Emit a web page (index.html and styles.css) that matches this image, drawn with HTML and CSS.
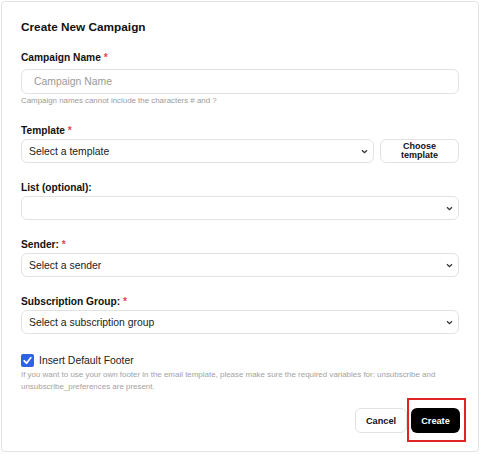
FILE: index.html
```html
<!DOCTYPE html>
<html>
<head>
<meta charset="utf-8">
<link rel="stylesheet" href="styles.css">
</head>
<body>
<div class="card">
  <h1 class="title">Create New Campaign</h1>

  <div class="field field-first">
    <div class="label label-name">Campaign Name <span class="req">*</span></div>
    <div class="input"><span class="placeholder">Campaign Name</span></div>
    <div class="hint">Campaign names cannot include the characters # and ?</div>
  </div>

  <div class="field">
    <div class="label">Template <span class="req">*</span></div>
    <div class="row">
      <div class="select grow"><span>Select a template</span>
        <svg class="chev" width="7" height="5" viewBox="0 0 7 5"><polyline points="1,1.2 3.5,3.6 6,1.2" fill="none" stroke="#333" stroke-width="1.3"/></svg>
      </div>
      <div class="btn-choose">Choose<br>template</div>
    </div>
  </div>

  <div class="field">
    <div class="label">List (optional):</div>
    <div class="select"><span></span>
      <svg class="chev" width="7" height="5" viewBox="0 0 7 5"><polyline points="1,1.2 3.5,3.6 6,1.2" fill="none" stroke="#333" stroke-width="1.3"/></svg>
    </div>
  </div>

  <div class="field">
    <div class="label">Sender: <span class="req">*</span></div>
    <div class="select"><span>Select a sender</span>
      <svg class="chev" width="7" height="5" viewBox="0 0 7 5"><polyline points="1,1.2 3.5,3.6 6,1.2" fill="none" stroke="#333" stroke-width="1.3"/></svg>
    </div>
  </div>

  <div class="field">
    <div class="label">Subscription Group: <span class="req">*</span></div>
    <div class="select"><span>Select a subscription group</span>
      <svg class="chev" width="7" height="5" viewBox="0 0 7 5"><polyline points="1,1.2 3.5,3.6 6,1.2" fill="none" stroke="#333" stroke-width="1.3"/></svg>
    </div>
  </div>

  <div class="field">
    <div class="check-row">
      <span class="checkbox">
        <svg width="13" height="13" viewBox="0 0 13 13"><polyline points="3.2,6.8 5.5,9.2 9.8,3.8" fill="none" stroke="#fff" stroke-width="1.8" stroke-linecap="round" stroke-linejoin="round"/></svg>
      </span>
      <span class="check-label">Insert Default Footer</span>
    </div>
    <div class="help">If you want to use your own footer in the email template, please make sure the required variables for: unsubscribe and unsubscribe_preferences are present.</div>
  </div>

  <div class="actions">
    <div class="btn btn-cancel">Cancel</div>
    <div class="btn btn-create">Create</div>
  </div>
</div>
</body>
</html>
```

FILE: styles.css
```css
* { box-sizing: border-box; }
html, body { margin: 0; background: #fff; }
body {
  padding: 1px;
  font-family: "Liberation Sans", Arial, sans-serif;
  color: #1a1a1a;
}
.card {
  width: 478px;
  height: 451px;
  border: 1px solid #e3e3e3;
  border-radius: 4px;
  padding: 18px 19px 18px 19px;
  background: #fff;
}
.title {
  margin: 0;
  font-size: 11.8px;
  line-height: 14px;
  font-weight: 700;
  color: #111;
}
.field { margin-top: 19px; }
.field-first { margin-top: 18px; }
.label {
  font-size: 10.2px;
  line-height: 12px;
  font-weight: 700;
  color: #111;
  margin-bottom: 2px;
}
.label-name { margin-bottom: 5px; }
.req { color: #e5484d; }
.input {
  height: 25px;
  border: 1px solid #e2e2e2;
  border-radius: 6px;
  display: flex;
  align-items: center;
  padding-left: 12px;
}
.placeholder {
  font-size: 10.4px;
  color: #9a9a9a;
}
.hint {
  margin-top: 2px;
  font-size: 7.9px;
  line-height: 10px;
  color: #9b9b9b;
}
.row {
  display: flex;
  gap: 6px;
}
.grow { flex: 1; }
.select {
  height: 24px;
  border: 1px solid #e2e2e2;
  border-radius: 6px;
  display: flex;
  align-items: center;
  justify-content: space-between;
  padding: 0 5px 0 7px;
  font-size: 10.4px;
  color: #222;
}
.chev { display: block; }
.btn-choose {
  width: 79px;
  height: 24px;
  border: 1px solid #e2e2e2;
  border-radius: 6px;
  display: flex;
  align-items: center;
  justify-content: center;
  text-align: center;
  font-size: 9px;
  line-height: 9.5px;
  font-weight: 700;
  color: #111;
}
.check-row {
  display: flex;
  align-items: center;
  gap: 5px;
  height: 14px;
}
.checkbox {
  width: 13px;
  height: 13px;
  border-radius: 2px;
  background: #2e63e6;
  display: block;
}
.checkbox svg { display: block; }
.check-label {
  font-size: 10.4px;
  color: #222;
}
.help {
  margin-top: 2px;
  font-size: 7.95px;
  line-height: 12px;
  color: #a3a3a3;
}
.actions {
  display: flex;
  justify-content: flex-end;
  gap: 4px;
  margin-top: 15px;
  margin-right: -1px;
}
.btn {
  height: 25px;
  border-radius: 6px;
  display: flex;
  align-items: center;
  justify-content: center;
  font-size: 9.2px;
  font-weight: 700;
}
.btn-cancel {
  width: 52px;
  border: 1px solid #e2e2e2;
  color: #111;
  background: #fff;
}
.btn-create {
  width: 49px;
  background: #000;
  color: #fff;
  position: relative;
}
.btn-create::after {
  content: "";
  position: absolute;
  left: -4px;
  right: -6px;
  top: -10px;
  bottom: -9px;
  border: 2px solid #e02424;
}
```
